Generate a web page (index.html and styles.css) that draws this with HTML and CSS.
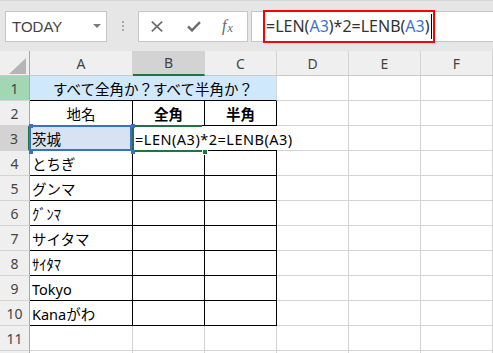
FILE: index.html
```html
<!DOCTYPE html>
<html lang="ja">
<head>
    <meta charset="UTF-8">
    <meta name="viewport" content="width=device-width, initial-scale=1.0">
    <title>LEN と LENB - 全角か半角か</title>
    <link rel="stylesheet" href="styles.css">
</head>
<body>
    <div class="toolbar">
        <div class="namebox">
            <span class="name">TODAY</span>
            <span class="caret"></span>
        </div>
        <div class="grip"><i></i><i></i><i></i></div>
        <div class="fx-buttons">
            <svg class="btn-x" width="12" height="11" viewBox="0 0 12 11"><path d="M0.8 0.6L11.2 10.4M11.2 0.6L0.8 10.4"/></svg>
            <svg class="btn-ok" width="14" height="11" viewBox="0 0 14 11"><path d="M1 5.4L5 9.4L13 1.2"/></svg>
            <span class="btn-fx"><i>f</i><i class="sub">x</i></span>
        </div>
        <div class="formula">
            <div class="formula-edit">=LEN(<span class="ref">A3</span>)*2=LENB(<span class="ref">A3</span>)<span class="text-caret"></span></div>
        </div>
    </div>

    <div class="sheet">
        <!-- column headers -->
        <div class="hd corner"></div>
        <div class="hd col">A</div>
        <div class="hd col sel-col">B</div>
        <div class="hd col">C</div>
        <div class="hd col">D</div>
        <div class="hd col">E</div>
        <div class="hd col">F</div>

        <!-- row 1 -->
        <div class="hd row hl">1</div>
        <div class="cell title">すべて全角か？すべて半角か？</div>
        <div class="cell"></div>
        <div class="cell"></div>
        <div class="cell"></div>

        <!-- row 2 -->
        <div class="hd row">2</div>
        <div class="cell box center">地名</div>
        <div class="cell box center bold">全角</div>
        <div class="cell box center bold">半角</div>
        <div class="cell"></div>
        <div class="cell"></div>
        <div class="cell"></div>

        <!-- row 3 -->
        <div class="hd row sel-row">3</div>
        <div class="cell box ref-range">茨城<i class="h tl"></i><i class="h tr"></i><i class="h bl"></i><i class="h br"></i></div>
        <div class="cell box editing">=LEN(A3)*2=LENB(A3)<i class="fill-handle"></i></div>
        <div class="cell box open"></div>
        <div class="cell"></div>
        <div class="cell"></div>
        <div class="cell"></div>

        <!-- rows 4-10 -->
        <div class="hd row">4</div>
        <div class="cell box">とちぎ</div>
        <div class="cell box"></div>
        <div class="cell box"></div>
        <div class="cell"></div>
        <div class="cell"></div>
        <div class="cell"></div>

        <div class="hd row">5</div>
        <div class="cell box">グンマ</div>
        <div class="cell box"></div>
        <div class="cell box"></div>
        <div class="cell"></div>
        <div class="cell"></div>
        <div class="cell"></div>

        <div class="hd row">6</div>
        <div class="cell box">ｸﾞﾝﾏ</div>
        <div class="cell box"></div>
        <div class="cell box"></div>
        <div class="cell"></div>
        <div class="cell"></div>
        <div class="cell"></div>

        <div class="hd row">7</div>
        <div class="cell box">サイタマ</div>
        <div class="cell box"></div>
        <div class="cell box"></div>
        <div class="cell"></div>
        <div class="cell"></div>
        <div class="cell"></div>

        <div class="hd row">8</div>
        <div class="cell box">ｻｲﾀﾏ</div>
        <div class="cell box"></div>
        <div class="cell box"></div>
        <div class="cell"></div>
        <div class="cell"></div>
        <div class="cell"></div>

        <div class="hd row">9</div>
        <div class="cell box">Tokyo</div>
        <div class="cell box"></div>
        <div class="cell box"></div>
        <div class="cell"></div>
        <div class="cell"></div>
        <div class="cell"></div>

        <div class="hd row">10</div>
        <div class="cell box">Kanaがわ</div>
        <div class="cell box"></div>
        <div class="cell box"></div>
        <div class="cell"></div>
        <div class="cell"></div>
        <div class="cell"></div>

        <!-- row 11, and the top edge of row 12 -->
        <div class="hd row">11</div>
        <div class="cell"></div>
        <div class="cell"></div>
        <div class="cell"></div>
        <div class="cell"></div>
        <div class="cell"></div>
        <div class="cell"></div>

        <div class="hd row"></div>
        <div class="cell"></div>
        <div class="cell"></div>
        <div class="cell"></div>
        <div class="cell"></div>
        <div class="cell"></div>
        <div class="cell"></div>
    </div>
</body>
</html>
```

FILE: styles.css
```css
* {
    box-sizing: border-box;
}
html, body {
    margin: 0;
    background: #fff;
    overflow: hidden;
}
body {
    font-family: "Noto Sans", "Noto Sans CJK JP", sans-serif;
}

/* formula bar */
.toolbar {
    height: 51px;
    background: #e6e6e6;
    border-top: 1px solid #d6d6d6;
    display: flex;
    align-items: center;
    padding-left: 5px;
}
.namebox {
    width: 102px;
    height: 31px;
    background: #fff;
    border: 1px solid #c6c6c6;
    display: flex;
    align-items: center;
    justify-content: space-between;
    padding: 0 5px 0 6px;
}
.name {
    font-family: "Liberation Sans", Arial, sans-serif;
    font-size: 15px;
    color: #444;
}
.caret {
    width: 0;
    height: 0;
    border-left: 4px solid transparent;
    border-right: 4px solid transparent;
    border-top: 4px solid #7a7a7a;
}
.grip {
    margin-left: 15px;
    display: flex;
    flex-direction: column;
    gap: 2px;
}
.grip i {
    width: 2px;
    height: 2px;
    background: #a8a8a8;
}
.fx-buttons {
    margin-left: 14px;
    width: 110px;
    height: 31px;
    background: #fff;
    border: 1px solid #c6c6c6;
    display: flex;
    align-items: center;
    padding-left: 12px;
}
.fx-buttons svg {
    fill: none;
    stroke: #6d6d6d;
}
.btn-x {
    stroke-width: 1.7;
}
.btn-ok {
    margin-left: 24px;
    stroke-width: 2.4;
}
.btn-fx {
    margin-left: 21px;
    font-family: "Liberation Serif", "Times New Roman", serif;
    color: #666;
    font-size: 16px;
    line-height: 1;
}
.btn-fx .sub {
    font-size: 12px;
    position: relative;
    top: 1px;
    margin-left: 1px;
}
.formula {
    flex: 1;
    margin-left: 3px;
    height: 31px;
    background: #fff;
    border: 1px solid #c6c6c6;
    border-right: none;
    display: flex;
    align-items: center;
    padding-left: 11px;
}
.formula-edit {
    width: 172px;
    height: 33px;
    flex-shrink: 0;
    border: 2px solid #ff0000;
    display: flex;
    align-items: center;
    padding-left: 1px;
    font-size: 16px;
    color: #333;
    white-space: nowrap;
}
.formula-edit .ref {
    color: #3b74cc;
}
.text-caret {
    width: 1px;
    height: 25px;
    background: #000;
    margin-left: 1px;
}

/* worksheet */
.sheet {
    display: grid;
    grid-template-columns: 30px 103px 72px 72px 72px 72px 72px;
    grid-auto-rows: 25px;
    font-size: 14.5px;
}
.hd {
    background: #efefef;
    border-right: 1px solid #d4d4d4;
    border-bottom: 1px solid #c8c8c8;
    display: flex;
    align-items: center;
    justify-content: center;
    font-size: 14px;
    color: #444;
}
.hd.row {
    border-right-color: #a9a9a9;
    border-bottom-color: #d4d4d4;
}
.hd.corner {
    position: relative;
    border-right-color: #a9a9a9;
}
.hd.corner::after {
    content: "";
    position: absolute;
    right: 3px;
    bottom: 1px;
    border-left: 17px solid transparent;
    border-bottom: 16px solid #b5b5b5;
}
.hd.sel-col {
    background: #d3d3d3;
    border-bottom: 2px solid #217346;
}
.hd.sel-row {
    background: #d3d3d3;
    border-right: 2px solid #217346;
}
.hd.hl {
    background: #a2d7b6;
}
.cell {
    border-right: 1px solid #d4d4d4;
    border-bottom: 1px solid #d4d4d4;
    display: flex;
    align-items: flex-end;
    padding: 0 2px 1px;
    line-height: 20px;
    white-space: nowrap;
    color: #000;
}
.box {
    border-right-color: #000;
    border-bottom-color: #000;
}
.center {
    justify-content: center;
}
.bold {
    font-weight: bold;
}
.title {
    grid-column: span 3;
    justify-content: center;
    background: #cfe8fb;
    border-bottom-color: #000;
}

/* range referenced by the formula */
.ref-range {
    position: relative;
    background: #d7e2f2;
}
.ref-range::before {
    content: "";
    position: absolute;
    top: -1px;
    left: -1px;
    right: 0;
    bottom: -1px;
    border: 2px solid #3d6fc8;
}
.ref-range .h {
    position: absolute;
    width: 4px;
    height: 4px;
    background: #3d6fc8;
    z-index: 2;
}
.ref-range .tl { left: -1px; top: -2px; }
.ref-range .tr { left: 101px; top: -2px; }
.ref-range .bl { left: -1px; top: 24px; }
.ref-range .br { left: 101px; top: 24px; }

/* cell being edited */
.editing {
    position: relative;
    border-right: none;
    letter-spacing: 0.5px;
}
.editing::before {
    content: "";
    position: absolute;
    top: -1px;
    left: -1px;
    right: 3px;
    bottom: -2px;
    border: 2px solid #217346;
    border-right: none;
}
.fill-handle {
    position: absolute;
    right: -3px;
    bottom: -5px;
    width: 6px;
    height: 6px;
    background: #217346;
    border: 1px solid #fff;
}
.open {
    border-right: none;
}
```
